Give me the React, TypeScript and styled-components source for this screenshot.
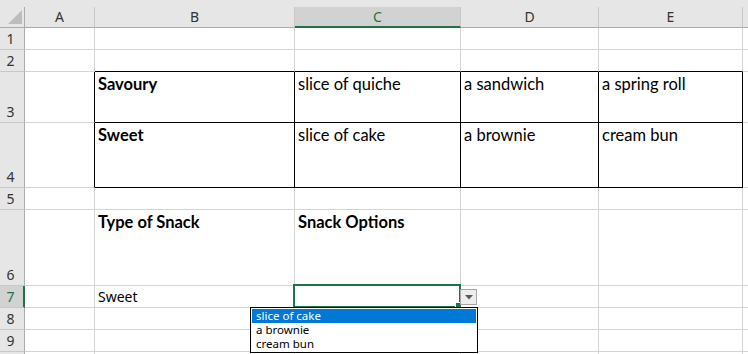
import React from "react";
import styled, { createGlobalStyle, css } from "styled-components";

const GREEN = "#217346";
const GRID = "#d4d4d4";
const HEAD_BG = "#e6e6e6";
const HEAD_SEL = "#d2d2d2";
const HEAD_LINE = "#ababab";
const HEAD_SEP = "#c8c8c8";
const INK = "#000000";

const GlobalStyle = createGlobalStyle`
  html, body { margin: 0; padding: 0; background: #ffffff; }
  body { overflow: hidden; }
`;

const COLS = ["A", "B", "C", "D", "E", "F"];
const ROWS = [1, 2, 3, 4, 5, 6, 7, 8, 9, 10];

type CellData = { text: string; bold?: boolean; ui?: boolean; bottom?: boolean };

const CONTENT: Record<string, CellData> = {
  B3: { text: "Savoury", bold: true },
  C3: { text: "slice of quiche" },
  D3: { text: "a sandwich" },
  E3: { text: "a spring roll" },
  B4: { text: "Sweet", bold: true },
  C4: { text: "slice of cake" },
  D4: { text: "a brownie" },
  E4: { text: "cream bun" },
  B6: { text: "Type of Snack", bold: true },
  C6: { text: "Snack Options", bold: true },
  B7: { text: "Sweet", ui: true, bottom: true },
};

const OPTIONS = ["slice of cake", "a brownie", "cream bun"];

const inTable = (c: string, r: number) => "BCDE".includes(c) && r >= 3 && r <= 4;

const rightColor = (c: string, r: number) =>
  inTable(c, r) || (c === "A" && r >= 3 && r <= 4) ? INK : GRID;

const bottomColor = (c: string, r: number) =>
  "BCDE".includes(c) && r >= 2 && r <= 4 ? INK : GRID;

const Sheet = styled.div`
  display: grid;
  grid-template-columns: 25px 70px 200px 166px 138px 144px 1fr;
  grid-template-rows: 7px 21px 22px 22px 51px 65px 22px 76px 22px 22px 22px 1fr;
  width: 748px;
  height: 354px;
  overflow: hidden;
  background: #ffffff;
`;

const TopStrip = styled.div`
  grid-column: 1 / -1;
  background: ${HEAD_BG};
`;

const Corner = styled.div`
  background: ${HEAD_BG};
  border-right: 1px solid ${HEAD_LINE};
  border-bottom: 1px solid ${HEAD_LINE};
  box-sizing: border-box;
  display: flex;
  align-items: flex-end;
  justify-content: flex-end;
  padding: 0 2px 3px 0;
`;

const ColHeader = styled.div<{ $selected?: boolean }>`
  box-sizing: border-box;
  background: ${(p) => (p.$selected ? HEAD_SEL : HEAD_BG)};
  border-right: 1px solid ${HEAD_SEP};
  border-bottom: ${(p) => (p.$selected ? `2px solid ${GREEN}` : `1px solid ${HEAD_LINE}`)};
  display: flex;
  align-items: center;
  justify-content: center;
  padding-top: ${(p) => (p.$selected ? "1px" : "0")};
  font-family: "Noto Sans", "Open Sans", sans-serif;
  font-size: 14px;
  line-height: 16px;
  color: ${(p) => (p.$selected ? GREEN : "#333333")};
  overflow: hidden;
`;

const RowHeader = styled.div<{ $selected?: boolean }>`
  box-sizing: border-box;
  background: ${(p) => (p.$selected ? HEAD_SEL : HEAD_BG)};
  border-right: ${(p) => (p.$selected ? `2px solid ${GREEN}` : `1px solid ${HEAD_LINE}`)};
  border-bottom: 1px solid ${HEAD_SEP};
  display: flex;
  align-items: flex-end;
  justify-content: center;
  padding: 0 ${(p) => (p.$selected ? "2px" : "3px")} 2px 0;
  font-family: "Noto Sans", "Open Sans", sans-serif;
  font-size: 14px;
  line-height: 16px;
  color: ${(p) => (p.$selected ? GREEN : "#333333")};
  overflow: hidden;
`;

const Cell = styled.div<{ $right: string; $bottom: string; $valign?: "top" | "bottom" }>`
  position: relative;
  box-sizing: border-box;
  border-right: 1px solid ${(p) => p.$right};
  border-bottom: 1px solid ${(p) => p.$bottom};
  display: flex;
  flex-direction: column;
  justify-content: ${(p) => (p.$valign === "bottom" ? "flex-end" : "flex-start")};
  padding: ${(p) => (p.$valign === "bottom" ? "0 3px 2px 3px" : "2px 3px 0 3px")};
  min-width: 0;
  white-space: nowrap;
`;

const CellText = styled.span<{ $bold?: boolean; $ui?: boolean }>`
  color: ${INK};
  ${(p) =>
    p.$ui
      ? css`
          font-family: "Noto Sans", "Open Sans", sans-serif;
          font-size: 14px;
          line-height: 16px;
        `
      : css`
          font-family: Lato, "Liberation Sans", sans-serif;
          font-size: 16.5px;
          line-height: 20px;
        `}
  font-weight: ${(p) => (p.$bold ? 700 : 400)};
`;

const Selection = styled.div`
  position: absolute;
  top: -2px;
  left: -2px;
  right: -1px;
  bottom: -1px;
  border: 2px solid ${GREEN};
  pointer-events: none;
  z-index: 3;
`;

const FillHandle = styled.span`
  position: absolute;
  right: -3px;
  bottom: -3px;
  width: 5px;
  height: 5px;
  background: ${GREEN};
  border: 1px solid #ffffff;
`;

const DropButton = styled.div`
  position: absolute;
  left: 100%;
  top: 3px;
  width: 17px;
  height: 16px;
  box-sizing: border-box;
  border: 1px solid #a6a6a6;
  background: #ededed;
  display: flex;
  align-items: center;
  justify-content: center;
  z-index: 4;
`;

const ListBox = styled.div`
  position: absolute;
  left: -45px;
  top: 21px;
  width: 228px;
  box-sizing: border-box;
  border: 1px solid #000000;
  background: #ffffff;
  padding: 1px;
  display: flex;
  flex-direction: column;
  z-index: 5;
`;

const ListItem = styled.div<{ $active?: boolean }>`
  height: 14px;
  padding: 0 0 0 4px;
  font-family: "Noto Sans", "Open Sans", sans-serif;
  font-size: 11.5px;
  line-height: 14px;
  color: ${(p) => (p.$active ? "#ffffff" : "#000000")};
  background: ${(p) => (p.$active ? "#0078d7" : "transparent")};
  white-space: nowrap;
`;

const CornerTriangle = () => (
  <svg width="14" height="14" viewBox="0 0 14 14">
    <polygon points="14,0 14,14 0,14" fill="#bdbdbd" />
  </svg>
);

const DownArrow = () => (
  <svg width="8" height="5" viewBox="0 0 8 5">
    <polygon points="0,0 8,0 4,4.5" fill="#5a5a5a" />
  </svg>
);

export default function App() {
  return (
    <>
      <GlobalStyle />
      <Sheet>
        <TopStrip />
        <Corner>
          <CornerTriangle />
        </Corner>
        {COLS.map((c) => (
          <ColHeader key={c} $selected={c === "C"}>
            {c === "F" ? "" : c}
          </ColHeader>
        ))}
        {ROWS.map((r) => (
          <React.Fragment key={r}>
            <RowHeader $selected={r === 7}>{r < 10 ? r : ""}</RowHeader>
            {COLS.map((c) => {
              const id = `${c}${r}`;
              const data = CONTENT[id];
              return (
                <Cell
                  key={id}
                  $right={rightColor(c, r)}
                  $bottom={bottomColor(c, r)}
                  $valign={data?.bottom ? "bottom" : "top"}
                >
                  {data && (
                    <CellText $bold={data.bold} $ui={data.ui}>
                      {data.text}
                    </CellText>
                  )}
                  {id === "C7" && (
                    <>
                      <Selection>
                        <FillHandle />
                      </Selection>
                      <DropButton>
                        <DownArrow />
                      </DropButton>
                      <ListBox>
                        {OPTIONS.map((o, i) => (
                          <ListItem key={o} $active={i === 0}>
                            {o}
                          </ListItem>
                        ))}
                      </ListBox>
                    </>
                  )}
                </Cell>
              );
            })}
          </React.Fragment>
        ))}
      </Sheet>
    </>
  );
}
